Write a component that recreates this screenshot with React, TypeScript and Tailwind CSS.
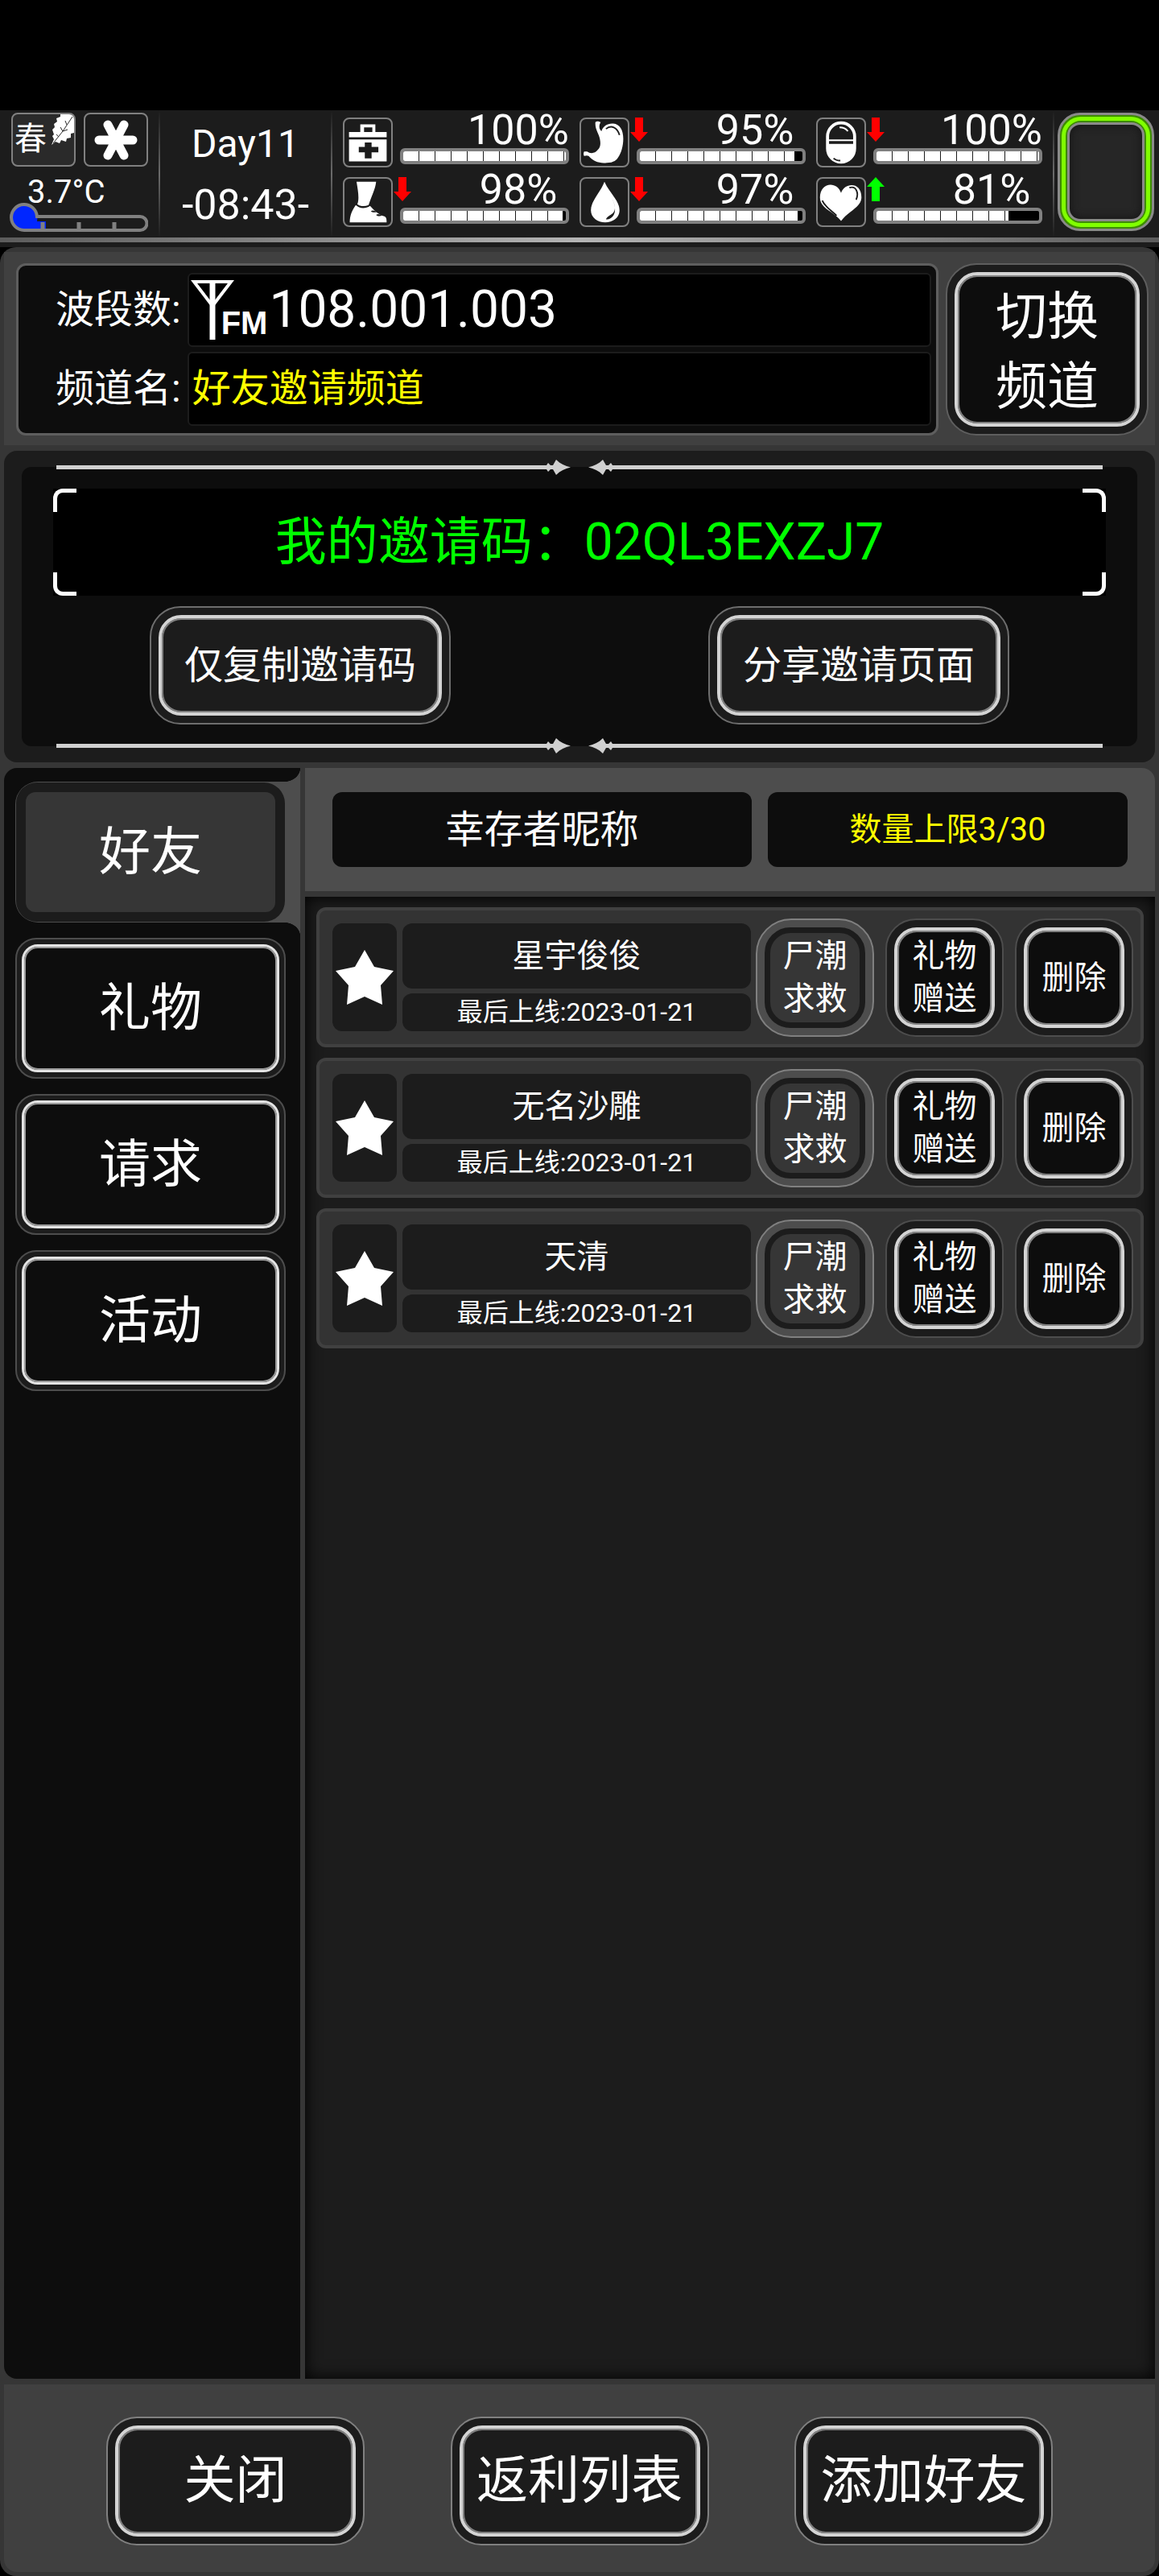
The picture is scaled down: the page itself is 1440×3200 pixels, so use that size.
import type { ReactNode } from 'react'
import clsx from 'clsx'

const friends = [
  { name: '星宇俊俊', lastOnline: '2023-01-21' },
  { name: '无名沙雕', lastOnline: '2023-01-21' },
  { name: '天清', lastOnline: '2023-01-21' },
]

const tabs = ['好友', '礼物', '请求', '活动']

const footerActions = ['关闭', '返利列表', '添加好友']

type Stat = {
  label: string
  value: number
  trend?: 'up' | 'down'
  icon: ReactNode
}

const stats: Stat[] = [
  { label: '健康', value: 100, icon: <MedkitIcon /> },
  { label: '饱食', value: 95, trend: 'down', icon: <StomachIcon /> },
  { label: '药物', value: 100, trend: 'down', icon: <PillIcon /> },
  { label: '体力', value: 98, trend: 'down', icon: <FootIcon /> },
  { label: '水分', value: 97, trend: 'down', icon: <DropIcon /> },
  { label: '心情', value: 81, trend: 'up', icon: <HeartIcon /> },
]

function MedkitIcon() {
  return (
    <svg viewBox="0 0 62 62" className="size-full" aria-hidden="true">
      <path d="M21 7h20v10h-4v-6H26v6h-5z" fill="#fff" />
      <path d="M6 17h50v7H6zM6 27h50v29H6z" fill="#fff" />
      <path d="M27 31h9v6h9v7h-9v8h-9v-8h-8v-7h8z" fill="#1c1c1c" />
    </svg>
  )
}

function FootIcon() {
  return (
    <svg viewBox="0 0 62 62" className="size-full" aria-hidden="true">
      <path d="M16 4h26c-1 10-6 19-10 31-5 2-11 2-15-1 3-7 1-18-1-30z" fill="#fff" />
      <path d="M15 35c5 5 13 5 19 1 6 7 12 12 19 14 3 1 3 5 3 8H7c0-9 3-16 8-23z" fill="#fff" />
      <path d="M35 43c3-2 6 0 8 1-3 1-6 1-8-1zM42 48c3-2 6 0 8 1-3 1-6 1-8-1z" fill="#1c1c1c" />
    </svg>
  )
}

function StomachIcon() {
  return (
    <svg viewBox="0 0 62 62" className="size-full" aria-hidden="true">
      <path
        d="M19 4c2-2 4-1 7 0-3 5-2 9 1 12 2-7 9-11 16-10 8 1 13 8 13 20 0 10-3 20-7 25-3 5-8 7-15 7-10 1-18-2-24-9-2-1-3-1-6 0-1-2-1-4 0-6h4c4 3 10 3 14-2 4-4 4-9 3-14-1-8-7-13-6-23z"
        fill="#fff"
      />
      <path d="M33 13c7-6 15-2 18 8" fill="none" stroke="#1c1c1c" strokeWidth="2" />
    </svg>
  )
}

function DropIcon() {
  return (
    <svg viewBox="0 0 62 62" className="size-full" aria-hidden="true">
      <path d="M31 4c6 14 20 25 20 38 0 10-9 16-19 16s-19-6-19-16C13 29 26 18 31 4z" fill="#fff" />
      <path d="M41 26c5 10 5 16 1 20-4 3-8 5-9 8 7 0 12-5 12-13 0-6-2-11-4-15z" fill="#1c1c1c" />
    </svg>
  )
}

function PillIcon() {
  return (
    <svg viewBox="0 0 62 62" className="size-full" aria-hidden="true">
      <rect x="13" y="5" width="36" height="52" rx="18" fill="none" stroke="#fff" strokeWidth="4" />
      <path d="M13 33h36v6a18 18 0 0 1-36 0z" fill="#fff" />
      <path d="M13 28h36" stroke="#fff" strokeWidth="2" />
      <path d="M29 11c5 0 8 1 11 5" fill="none" stroke="#fff" strokeWidth="2" />
      <path d="M21 52c2 2 5 3 9 3" fill="none" stroke="#1c1c1c" strokeWidth="2" />
    </svg>
  )
}

function HeartIcon() {
  return (
    <svg viewBox="0 0 62 62" className="size-full" aria-hidden="true">
      <path d="M31 19C35 5 59 3 58 26 57 38 40 44 31 56 22 44 3 40 3 25 3 4 26 3 31 19z" fill="#fff" />
      <path d="M42 12c9-3 13 7 9 16M6 29c4 9 12 13 19 20" fill="none" stroke="#1c1c1c" strokeWidth="2" />
    </svg>
  )
}

function LeafIcon() {
  return (
    <svg viewBox="0 0 28 38" className="h-[38px] w-7" aria-hidden="true">
      <path
        d="M0 38 3 31 1 27 3 25 1 19 4 16 3 12 7 9 6 5 11 3 11 0H28V23L24 24 24 29 19 30 18 34 12 32 10 36 5 34z"
        fill="#fff"
      />
      <path d="M2 36 14 21 26 3M14 21l-3-5M14 21l6-2M19 13l-2-5M9 28l-3-3" fill="none" stroke="#2a2a2a" strokeWidth="1" />
    </svg>
  )
}

function SnowIcon() {
  return (
    <svg viewBox="0 0 54 50" className="h-[50px] w-[54px]" aria-hidden="true">
      <path
        d="M6 25h42M17 6l20 38M37 6 17 44"
        stroke="#fff"
        strokeWidth="11"
        strokeLinecap="round"
      />
    </svg>
  )
}

function Thermometer() {
  return (
    <svg viewBox="0 0 172 38" className="-ml-0.5 h-[38px] w-[172px]" aria-hidden="true">
      <path d="M18 4a14 14 0 1 0 0 30h27V24H34A16 16 0 0 0 18 4z" fill="#0026ff" />
      <path d="M41 25v10M86 25v10M130 25v10" stroke="#808080" strokeWidth="5" />
      <path
        d="M34 18A16 16 0 1 0 18 35H162a8.500 8.500 0 0 0 0-17z"
        fill="none"
        stroke="#808080"
        strokeWidth="4"
      />
    </svg>
  )
}

function TrendArrow({ trend }: { trend: 'up' | 'down' }) {
  return (
    <svg
      viewBox="0 0 22 30"
      className={clsx('-ml-2 h-[30px] w-[22px]', trend === 'up' && 'rotate-180')}
      aria-hidden="true"
    >
      <path d="M6 0h10v18h6L11 30 0 18h6z" fill={trend === 'up' ? '#00ff00' : '#ff0000'} />
    </svg>
  )
}

function StarIcon() {
  return (
    <svg viewBox="0 0 72 68" className="h-[68px] w-[72px]" aria-hidden="true">
      <path d="M36 0 48 21 72 26 56 44 58 68 36 58 14 68 16 44 0 26 24 21z" fill="#fff" />
    </svg>
  )
}

function AntennaIcon() {
  return (
    <svg viewBox="0 0 54 74" className="h-[74px] w-[54px]" aria-hidden="true">
      <path d="M4 2h46L27 32z" fill="none" stroke="#fff" strokeWidth="4" />
      <path d="M27 0v74" stroke="#fff" strokeWidth="7" />
    </svg>
  )
}

function ArrowLine({ className }: { className?: string }) {
  const half = (
    <>
      <div className="h-[5px] flex-1 bg-[#d0d0d0]" />
      <svg viewBox="0 0 30 19" className="h-[19px] w-[30px]" aria-hidden="true">
        <path d="M0 7 2 4 5 7H8L12 0C17 5 23 8 30 9.500 23 11 17 14 12 19L8 12H5L2 15 0 12z" fill="#d0d0d0" />
      </svg>
    </>
  )
  return (
    <div className={clsx('mx-[43px] flex gap-[22px]', className)}>
      <div className="flex flex-1 items-center">{half}</div>
      <div className="flex flex-1 -scale-x-100 items-center">{half}</div>
    </div>
  )
}

function StatBar({ stat }: { stat: Stat }) {
  return (
    <div className="flex items-end gap-[9px]">
      <div className="size-[62px] shrink-0 rounded-lg border-2 border-[#808080]">{stat.icon}</div>
      <div className="mb-1 flex-1">
        <div className="mb-0.5 flex">
          <div className="w-[84px] pt-1">{stat.trend && <TrendArrow trend={stat.trend} />}</div>
          <span className="flex flex-1 justify-center text-[52px] leading-10">{stat.value}%</span>
        </div>
        <div
          role="meter"
          aria-label={stat.label}
          aria-valuenow={stat.value}
          className="h-5 overflow-hidden rounded-md border-4 border-[#808080] bg-black"
        >
          <div className="h-full overflow-hidden" style={{ width: `${stat.value}%` }}>
            <div className="h-full w-full bg-[repeating-linear-gradient(90deg,#fff_0px,#fff_19px,#1c1c1c_19px,#1c1c1c_20px)]" />
          </div>
        </div>
      </div>
    </div>
  )
}

function StatusDivider() {
  return <div className="w-0.5 shrink-0 bg-linear-to-b from-transparent via-[#6b6b6b] to-transparent" />
}

function StatusBar() {
  return (
    <header className="bg-black pt-[137px]">
      <div className="flex bg-[#1c1c1c]">
        <div className="w-[184px] shrink-0 pt-[3px] pl-3.5">
          <div className="flex gap-2.5">
            <div className="flex h-[67px] w-20 justify-between overflow-hidden rounded-lg border-2 border-[#808080] bg-[#2a2a2a] pl-0.5 text-[40px] leading-[62px]">
              春
              <LeafIcon />
            </div>
            <div className="flex h-[67px] w-20 items-center justify-center rounded-lg border-2 border-[#808080]">
              <SnowIcon />
            </div>
          </div>
          <p className="mt-3 pl-5 text-[40px] leading-10">3.7°C</p>
          <div className="-mt-2">
            <Thermometer />
          </div>
        </div>
        <div className="w-[13px] shrink-0" />
        <StatusDivider />
        <div className="flex w-[212px] shrink-0 flex-col items-center pt-2.5">
          <span className="text-5xl leading-[64px]">Day11</span>
          <span className="mt-3 text-[52px] leading-[64px]">-08:43-</span>
        </div>
        <StatusDivider />
        <div className="grid flex-1 grid-cols-3 gap-x-[13px] gap-y-2 px-[13px] pt-[5px] pb-[13px]">
          {stats.map((stat) => (
            <StatBar key={stat.label} stat={stat} />
          ))}
        </div>
        <StatusDivider />
        <div className="flex w-[130px] shrink-0 py-[3px] pr-1.5 pb-2 pl-1">
          <button
            aria-label="角色"
            className="flex flex-1 rounded-[28px] border-[3px] border-[#8a8a8a] bg-[#3d8a00]"
          >
            <span className="m-0.5 flex flex-1 self-stretch rounded-3xl border-[5px] border-[#80ff00] bg-[#3d8a00] p-0.5">
              <span className="flex-1 rounded-2xl border-[3px] border-[#8a8a8a] bg-[#262626] shadow-[inset_0_0_12px_#141414]" />
            </span>
          </button>
        </div>
      </div>
      <div className="h-1.5 bg-linear-to-r from-[#5c5c5c] via-[#b4b4b4] to-[#5c5c5c]" />
      <div className="h-1.5 bg-[#1c1c1c]" />
    </header>
  )
}

/* Framed button: thin outer line, dark gap, bright inner ring */
function FrameButton({
  children,
  className,
  innerClassName,
}: {
  children: ReactNode
  className?: string
  innerClassName?: string
}) {
  return (
    <button className={clsx('flex rounded-[38px] border-2 bg-[#1c1c1c] p-[9px]', className)}>
      <span
        className={clsx(
          'flex flex-1 items-center justify-center self-stretch rounded-[28px] border-4 border-[#d4d4d4] shadow-[inset_0_0_0_2px_#808080]',
          innerClassName,
        )}
      >
        {children}
      </span>
    </button>
  )
}

function RadioPanel() {
  return (
    <section className="flex gap-[9px] bg-[#404040] pt-3.5 pr-2 pb-3 pl-[15px]">
      <dl className="grid flex-1 grid-cols-[auto_1fr] items-center gap-x-2 gap-y-1.5 rounded-xl border-[3px] border-[#5e5e5e] bg-[#0d0d0d] py-[9px] pr-1.5 pl-[46px]">
        <dt className="text-5xl leading-[64px]">波段数:</dt>
        <dd className="flex h-[92px] items-center rounded-md border-2 border-[#1c1c1c] bg-black pl-0.5">
          <AntennaIcon />
          <span className="-ml-4 self-end pb-1.5 font-[Liberation_Sans_Narrow,Liberation_Sans,sans-serif] text-[40px] leading-[44px] font-bold">
            FM
          </span>
          <span className="pl-0.5 text-[64px] leading-[84px]">108.001.003</span>
        </dd>
        <dt className="text-5xl leading-[64px]">频道名:</dt>
        <dd className="flex h-[92px] items-center rounded-md border-2 border-[#1c1c1c] bg-black pl-1 text-5xl leading-[64px] text-[#ffff00]">
          好友邀请频道
        </dd>
      </dl>
      <FrameButton
        className="w-[252px] border-[#5e5e5e]"
        innerClassName="bg-[#0d0d0d] pt-1.5 text-[64px] leading-[87px]"
      >
        切换
        <br />
        频道
      </FrameButton>
    </section>
  )
}

function InvitePanel() {
  return (
    <section className="mt-[7px] rounded-2xl bg-[#1c1c1c] px-[22px] py-5">
      <div className="rounded-xl bg-[#0d0d0d]">
        <ArrowLine className="relative -top-[9px] -mb-[9px]" />
        <div className="relative mx-[39px] mt-[17px] bg-black text-center text-[64px] leading-[133px] text-[#00ff00]">
          我的邀请码：02QL3EXZJ7
          <span className="absolute top-0 left-0 size-[29px] rounded-tl-xl border-t-[5px] border-l-[5px] border-white" />
          <span className="absolute top-0 right-0 size-[29px] rounded-tr-xl border-t-[5px] border-r-[5px] border-white" />
          <span className="absolute bottom-0 left-0 size-[29px] rounded-bl-xl border-b-[5px] border-l-[5px] border-white" />
          <span className="absolute right-0 bottom-0 size-[29px] rounded-br-xl border-r-[5px] border-b-[5px] border-white" />
        </div>
        <div className="mt-[13px] flex justify-between px-[159px]">
          {['仅复制邀请码', '分享邀请页面'].map((label) => (
            <FrameButton key={label} className="h-[147px] w-[374px] border-[#6e6e6e]" innerClassName="text-5xl">
              {label}
            </FrameButton>
          ))}
        </div>
        <ArrowLine className="relative top-[9px] -mt-px pt-[9px]" />
      </div>
    </section>
  )
}

function Sidebar() {
  return (
    <nav className="flex w-[368px] shrink-0 flex-col gap-[19px] rounded-l-2xl bg-[#0d0d0d] pt-[17px] pr-[18px] pl-3.5">
      {tabs.map((tab, index) =>
        index === 0 ? (
          <div key={tab} className="relative -mr-[18px] rounded-l-[28px] bg-[#4d4d4d] pr-5">
            <span className="absolute right-0 bottom-full h-[17px] w-5 bg-[radial-gradient(ellipse_at_top_left,#0d0d0d_70%,#4d4d4d_72%)]" />
            <span className="absolute top-full right-0 h-[17px] w-5 bg-[radial-gradient(ellipse_at_bottom_left,#0d0d0d_70%,#4d4d4d_72%)]" />
            <button
              aria-current="page"
              className="my-px ml-px flex h-[173px] w-full rounded-[26px] bg-[#1c1c1c] p-3"
            >
              <span className="flex flex-1 items-center justify-center self-stretch rounded-xl bg-[#363636] text-[64px]">
                {tab}
              </span>
            </button>
          </div>
        ) : (
          <button key={tab} className="flex h-[175px] rounded-[26px] border-2 border-[#4d4d4d] bg-[#1c1c1c] p-1.5">
            <span className="flex flex-1 items-center justify-center self-stretch rounded-[20px] border-[3px] border-[#e4e4e4] bg-[#0d0d0d] text-[64px] shadow-[inset_0_0_0_2px_#999]">
              {tab}
            </span>
          </button>
        ),
      )}
    </nav>
  )
}

function FriendRow({ name, lastOnline }: { name: string; lastOnline: string }) {
  return (
    <li className="flex items-center rounded-xl border-4 border-[#404040] bg-[#333] py-4 pr-[9px] pl-4">
      <button aria-label="收藏" className="flex h-[134px] w-20 shrink-0 items-center justify-center rounded-xl bg-[#1c1c1c]">
        <StarIcon />
      </button>
      <div className="ml-[7px] flex flex-1 flex-col gap-1.5 text-center">
        <p className="rounded-xl bg-[#1c1c1c] text-[40px] leading-[81px]">{name}</p>
        <p className="rounded-xl bg-[#1c1c1c] text-[32px] leading-[47px]">最后上线:{lastOnline}</p>
      </div>
      <div className="-my-2 ml-1.5 flex gap-3.5 text-[40px] leading-[53px]">
        <button className="flex size-[147px] rounded-[44px] border-2 border-[#808080] bg-[#4d4d4d] p-[9px]">
          <span className="flex flex-1 items-center justify-center self-stretch rounded-[32px] border-[7px] border-[#1c1c1c] bg-[#363636]">
            尸潮
            <br />
            求救
          </span>
        </button>
        <FrameButton className="size-[147px] border-[#4d4d4d]" innerClassName="bg-[#0d0d0d]">
          礼物
          <br />
          赠送
        </FrameButton>
        <FrameButton className="size-[147px] border-[#4d4d4d]" innerClassName="bg-[#0d0d0d]">
          删除
        </FrameButton>
      </div>
    </li>
  )
}

function FriendList() {
  return (
    <section className="ml-1.5 flex flex-1 flex-col">
      <div className="flex gap-5 rounded-tr-2xl bg-[#4d4d4d] px-[34px] py-[30px] text-center leading-[93px]">
        <h2 className="flex-[521] rounded-xl bg-[#0d0d0d] text-5xl leading-[93px]">幸存者昵称</h2>
        <p className="flex-[447] rounded-xl bg-[#0d0d0d] text-[40px] text-[#ffff00]">数量上限3/30</p>
      </div>
      <ul className="mt-[7px] flex flex-1 flex-col gap-[13px] bg-[#1c1c1c] p-3.5 pt-[13px] shadow-[inset_0_0_20px_#000]">
        {friends.map((friend) => (
          <FriendRow key={friend.name} {...friend} />
        ))}
      </ul>
    </section>
  )
}

export default function App() {
  return (
    <div className="flex min-h-screen flex-col bg-black font-[Roboto,Noto_Sans_CJK_SC,sans-serif] text-white">
      <StatusBar />
      <div className="flex flex-1 flex-col rounded-[20px] bg-[#363636] px-[5px] pt-1.5 pb-[5px]">
        <RadioPanel />
        <InvitePanel />
        <main className="mt-[7px] flex flex-1">
          <Sidebar />
          <FriendList />
        </main>
        <footer className="mt-[7px] flex justify-between rounded-b-2xl bg-[#404040] px-[127px] pt-10 pb-[33px]">
          {footerActions.map((action) => (
            <FrameButton key={action} className="h-40 w-[321px] border-[#808080]" innerClassName="text-[64px]">
              {action}
            </FrameButton>
          ))}
        </footer>
      </div>
    </div>
  )
}
